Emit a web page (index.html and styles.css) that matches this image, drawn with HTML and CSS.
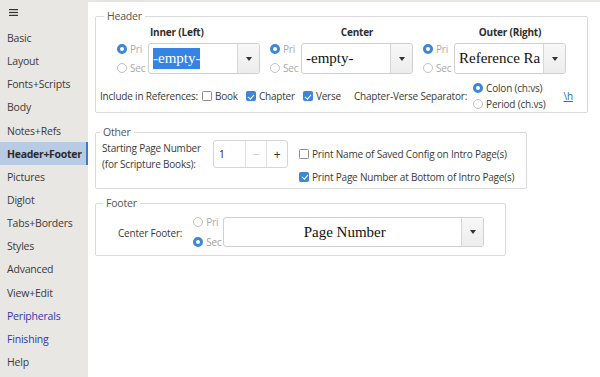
FILE: index.html
```html
<!DOCTYPE html>
<html lang="en">

<head>
    <meta charset="UTF-8">
    <meta name="viewport" content="width=device-width, initial-scale=1.0">
    <title>Header+Footer</title>
    <link rel="stylesheet" href="styles.css">
</head>

<body>
    <div class="app">
        <!-- Side tabs -->
        <nav class="side">
            <div class="menu-btn">
                <svg width="9" height="7" viewBox="0 0 9 7">
                    <rect x="0" y="0" width="9" height="1.2" fill="#333"/>
                    <rect x="0" y="2.9" width="9" height="1.2" fill="#333"/>
                    <rect x="0" y="5.8" width="9" height="1.2" fill="#333"/>
                </svg>
            </div>
            <div class="tab">Basic</div>
            <div class="tab">Layout</div>
            <div class="tab">Fonts+Scripts</div>
            <div class="tab">Body</div>
            <div class="tab">Notes+Refs</div>
            <div class="tab active">Header+Footer</div>
            <div class="tab">Pictures</div>
            <div class="tab">Diglot</div>
            <div class="tab">Tabs+Borders</div>
            <div class="tab">Styles</div>
            <div class="tab">Advanced</div>
            <div class="tab">View+Edit</div>
            <div class="tab link">Peripherals</div>
            <div class="tab link">Finishing</div>
            <div class="tab">Help</div>
        </nav>

        <main class="page">
            <!-- Header -->
            <fieldset class="frame frame-header">
                <legend>Header</legend>
                <div class="slots">
                    <div class="slot slot-inner">
                        <div class="slot-title">Inner (Left)</div>
                        <div class="radios">
                            <div class="radio-row"><span class="radio on"></span>Pri</div>
                            <div class="radio-row"><span class="radio"></span>Sec</div>
                        </div>
                        <div class="combo">
                            <div class="combo-text"><span class="sel">-empty-</span></div>
                            <div class="combo-btn"></div>
                        </div>
                    </div>
                    <div class="slot">
                        <div class="slot-title">Center</div>
                        <div class="radios">
                            <div class="radio-row"><span class="radio on"></span>Pri</div>
                            <div class="radio-row"><span class="radio"></span>Sec</div>
                        </div>
                        <div class="combo">
                            <div class="combo-text">-empty-</div>
                            <div class="combo-btn"></div>
                        </div>
                    </div>
                    <div class="slot">
                        <div class="slot-title">Outer (Right)</div>
                        <div class="radios">
                            <div class="radio-row"><span class="radio on"></span>Pri</div>
                            <div class="radio-row"><span class="radio"></span>Sec</div>
                        </div>
                        <div class="combo">
                            <div class="combo-text">Reference Ra</div>
                            <div class="combo-btn"></div>
                        </div>
                    </div>
                </div>

                <div class="include-row">
                    <span class="include-label">Include in References:</span>
                    <span class="check-item"><span class="check"></span>Book</span>
                    <span class="check-item"><span class="check on"></span>Chapter</span>
                    <span class="check-item"><span class="check on"></span>Verse</span>
                    <span class="sep-label">Chapter-Verse Separator:</span>
                    <div class="sep-radios">
                        <div class="sep-row"><span class="radio on"></span>Colon (ch:vs)</div>
                        <div class="sep-row"><span class="radio"></span>Period (ch.vs)</div>
                    </div>
                    <a class="code-link">\h</a>
                </div>
            </fieldset>

            <!-- Other -->
            <fieldset class="frame frame-other">
                <legend>Other</legend>
                <div class="other-body">
                    <div class="start-label">Starting Page Number<br>(for Scripture Books):</div>
                    <div class="spin">
                        <div class="spin-value">1</div>
                        <div class="spin-btn off">&minus;</div>
                        <div class="spin-btn">+</div>
                    </div>
                    <div class="other-checks">
                        <div class="check-row"><span class="check"></span>Print Name of Saved Config on Intro Page(s)</div>
                        <div class="check-row"><span class="check on"></span>Print Page Number at Bottom of Intro Page(s)</div>
                    </div>
                </div>
            </fieldset>

            <!-- Footer -->
            <fieldset class="frame frame-footer">
                <legend>Footer</legend>
                <div class="footer-body">
                    <span class="footer-label">Center Footer:</span>
                    <div class="radios footer-radios">
                        <div class="radio-row"><span class="radio"></span>Pri</div>
                        <div class="radio-row on-row"><span class="radio on"></span>Sec</div>
                    </div>
                    <div class="combo combo-wide">
                        <div class="combo-text centered">Page Number</div>
                        <div class="combo-btn"></div>
                    </div>
                </div>
            </fieldset>
        </main>
    </div>
</body>

</html>
```

FILE: styles.css
```css
body {
    margin: 0;
    font-family: "Open Sans", "Noto Sans", sans-serif;
    font-size: 10px;
    letter-spacing: -0.2px;
    color: #3a3a3a;
    background: #ffffff;
    overflow: hidden;
}

.app {
    display: flex;
    height: 377px;
}

/* side tabs */
.side {
    width: 88px;
    flex: none;
    background-color: #e9e7e4;
    font-size: 10.5px;
}

.menu-btn {
    height: 26.5px;
    padding-left: 9px;
    padding-top: 9px;
    box-sizing: border-box;
}

.menu-btn svg {
    display: block;
}

.tab {
    height: 23.15px;
    display: flex;
    align-items: center;
    padding-left: 7px;
    color: #3a3a3a;
}

.tab.active {
    background-color: #b7cbe4;
    border-right: 2px solid #3b7ccf;
    font-weight: bold;
    letter-spacing: -0.3px;
    color: #2b2b2b;
}

.tab.link {
    color: #3434b0;
}

/* main page */
.page {
    flex: 1;
    border-top: 2px solid #e6e4e1;
    padding: 6.5px 0 0 7px;
}

.frame {
    margin: 0;
    padding: 0;
    border: 1px solid #dadada;
    border-radius: 2px;
    box-sizing: border-box;
}

.frame legend {
    padding: 0 3px;
    line-height: 15px;
    font-size: 10.5px;
    color: #555555;
}

.frame-header {
    width: 493px;
}

.frame-header legend {
    margin-left: 8px;
}

.frame-other {
    width: 432px;
    margin-top: 12px;
}

.frame-other legend {
    margin-left: 4px;
}

.frame-footer {
    width: 411px;
    margin-top: 7px;
}

.frame-footer legend {
    margin-left: 7px;
}

/* header slots */
.slots {
    display: flex;
    gap: 10px;
    margin-left: 21px;
    margin-top: 1px;
}

.slot {
    display: grid;
    grid-template-columns: 31px 112px;
    align-items: center;
}

.slot-title {
    grid-column: 2;
    text-align: center;
    font-weight: bold;
    line-height: 15px;
    color: #2e2e2e;
}

.slot-inner .slot-title {
    text-align: left;
    padding-left: 2px;
}

.radios {
    line-height: 19px;
    color: #a9a9a9;
}

.radio-row {
    display: flex;
    align-items: center;
    gap: 3px;
}

.radio {
    width: 10px;
    height: 10px;
    box-sizing: border-box;
    border-radius: 50%;
    border: 1px solid #c2c2c2;
    background: #fff;
    flex: none;
}

.radio.on {
    border: 3px solid #3d86d8;
}

.combo {
    height: 31px;
    display: flex;
    border: 1px solid #d0d0d0;
    border-radius: 3px;
    box-sizing: border-box;
    background: #fff;
    overflow: hidden;
}

.combo-text {
    flex: 1;
    display: flex;
    align-items: center;
    padding-left: 4px;
    font-family: "Liberation Serif", serif;
    font-size: 15px;
    letter-spacing: 0;
    color: #111;
    white-space: nowrap;
}

.combo-text.centered {
    justify-content: center;
}

.sel {
    background-color: #3584e4;
    color: #fff;
    line-height: 21px;
}

.combo-btn {
    width: 21px;
    flex: none;
    background: linear-gradient(#f7f7f7, #ededed);
    border-left: 1px solid #d6d6d6;
    display: flex;
    align-items: center;
    justify-content: center;
}

.combo-btn::after {
    content: "";
    border-top: 4px solid #333;
    border-left: 3.5px solid transparent;
    border-right: 3.5px solid transparent;
}

/* include row */
.include-row {
    display: flex;
    align-items: center;
    margin: 2.5px 0 0 4px;
    height: 32px;
    white-space: nowrap;
}

.check-item {
    display: flex;
    align-items: center;
    gap: 3px;
    margin-right: 8px;
}

.include-label {
    margin-right: 4px;
}

.check {
    width: 10px;
    height: 10px;
    box-sizing: border-box;
    border: 1px solid #8c8c8c;
    border-radius: 1.5px;
    background: #fff;
    flex: none;
    position: relative;
}

.check.on {
    background-color: #3d86d8;
    border-color: #3d86d8;
}

.check.on::after {
    content: "";
    position: absolute;
    left: 2.5px;
    top: 0.5px;
    width: 2.5px;
    height: 5px;
    border-right: 1.6px solid #fff;
    border-bottom: 1.6px solid #fff;
    transform: rotate(40deg);
}

.sep-label {
    margin-left: 5px;
    margin-right: 6px;
}

.sep-row {
    display: flex;
    align-items: center;
    gap: 3px;
    line-height: 16px;
}

.code-link {
    margin-left: 18px;
    color: #2a6cc0;
    text-decoration: underline;
}

/* other */
.other-body {
    display: flex;
    align-items: flex-start;
    padding-left: 6px;
}

.start-label {
    width: 111px;
    line-height: 16px;
}

.spin {
    display: flex;
    height: 28px;
    border: 1px solid #d6d6d6;
    border-radius: 3px;
    box-sizing: border-box;
    margin-right: 11px;
}

.spin-value {
    width: 31px;
    padding-left: 5px;
    box-sizing: border-box;
    display: flex;
    align-items: center;
    color: #222;
}

.spin-btn {
    width: 20px;
    border-left: 1px solid #e2e2e2;
    display: flex;
    align-items: center;
    justify-content: center;
    font-size: 12px;
    color: #333;
}

.spin-btn.off {
    color: #c8c8c8;
}

.other-checks {
    margin-top: 2px;
    white-space: nowrap;
}

.check-row {
    height: 23px;
    display: flex;
    align-items: center;
    gap: 3px;
}

/* footer */
.footer-body {
    display: flex;
    align-items: center;
    padding: 1px 21px 3px 22px;
}

.footer-label {
    margin-right: 11px;
    padding-top: 2px;
    white-space: nowrap;
}

.footer-radios {
    line-height: 20px;
    width: 30px;
}

.on-row {
    color: #a0a0a0;
}

.combo-wide {
    width: 261px;
    height: 30px;
}
```
